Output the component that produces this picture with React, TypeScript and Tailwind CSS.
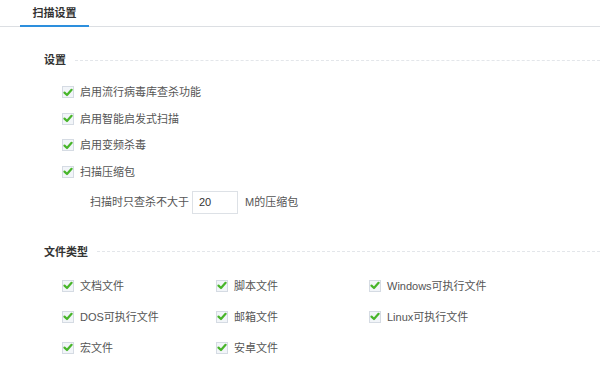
import React from "react";

const Check = () => (
  <span className="inline-flex h-[12px] w-[12px] shrink-0 items-center justify-center border border-[#d5dbe3] bg-[#f2f5f9]">
    <svg width="10" height="9" viewBox="0 0 10 9">
      <path d="M1.5 4.6 L4 7 L8.6 1.8" fill="none" stroke="#48b52a" strokeWidth="2.2" strokeLinecap="round" strokeLinejoin="round" />
    </svg>
  </span>
);

const Item = ({ label }: { label: string }) => (
  <div className="flex items-center gap-[6px]">
    <Check />
    <span>{label}</span>
  </div>
);

const Heading = ({ title }: { title: string }) => (
  <div className="flex items-center pl-[44px]">
    <span className="font-bold text-[#333]">{title}</span>
    <div className="ml-[9px] flex-1 border-t border-dashed border-[#e3e6ea]" />
  </div>
);

export default function App() {
  return (
    <div
      className="h-[374px] w-[600px] overflow-hidden bg-white text-[11px] leading-[16px] text-[#555]"
      style={{ fontFamily: '"Liberation Sans", "Noto Sans CJK SC", sans-serif' }}
    >
      <div className="flex h-[27px] border-b border-[#dcdfe3]">
        <div className="ml-[20px] flex w-[69px] items-end justify-center border-b-2 border-[#2d8fdd] pb-[4px] -mb-[1px]">
          <span className="font-bold text-[#333]">扫描设置</span>
        </div>
      </div>

      <div className="pt-[25px]">
        <Heading title="设置" />
        <div className="flex flex-col gap-[10.5px] pl-[62px] pt-[16px]">
          <Item label="启用流行病毒库查杀功能" />
          <Item label="启用智能启发式扫描" />
          <Item label="启用变频杀毒" />
          <Item label="扫描压缩包" />
        </div>
        <div className="flex items-center pl-[90px] pt-[11px]">
          <span>扫描时只查杀不大于</span>
          <div className="ml-[3px] flex h-[23px] w-[46px] items-center border border-[#dde1e6] pl-[6px] text-[#333]">
            20
          </div>
          <span className="ml-[7px]">M的压缩包</span>
        </div>
      </div>

      <div className="pt-[30px]">
        <Heading title="文件类型" />
        <div className="grid grid-cols-[154px_153px_1fr] gap-y-[15px] pl-[62px] pt-[18px]">
          <Item label="文档文件" />
          <Item label="脚本文件" />
          <Item label="Windows可执行文件" />
          <Item label="DOS可执行文件" />
          <Item label="邮箱文件" />
          <Item label="Linux可执行文件" />
          <Item label="宏文件" />
          <Item label="安卓文件" />
        </div>
      </div>
    </div>
  );
}
